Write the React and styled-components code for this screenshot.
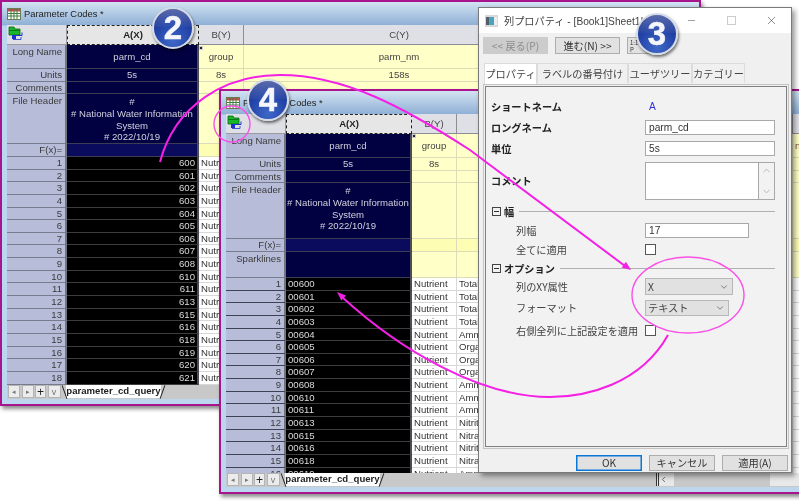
import React from 'react';
import styled, { createGlobalStyle } from 'styled-components';
import { ChevronDown, ChevronUp, ChevronLeft, X, Minus } from 'lucide-react';

const Global = createGlobalStyle`
  html, body { margin: 0; padding: 0; background: #fff; overflow: hidden; }
  * { box-sizing: border-box; }
`;

const Canvas = styled.div`
  position: relative;
  width: 799px;
  height: 501px;
  overflow: hidden;
  background: #fff;
  font-family: "Liberation Sans", Arial, sans-serif;
  filter: blur(0.4px);
`;

/* ---------- worksheet windows ---------- */
const Win = styled.section`
  position: absolute;
  left: ${p => p.$left}px;
  top: ${p => p.$top}px;
  width: ${p => p.$width}px;
  height: ${p => p.$height}px;
  display: flex;
  flex-direction: column;
  padding: 0 0 5px 5px;
  border: 2px solid #a8148e;
  background: linear-gradient(#d3e3f2 0, #8fb0d6 23px, #bcd6f0 24px);
  box-shadow: 2px 3px 4px rgba(0, 0, 0, 0.45);
`;
const TitleBar = styled.div`
  display: flex;
  align-items: center;
  gap: 3px;
  height: 23px;
  flex: none;
  font-size: 9.4px;
  color: #222;
`;
const Sheet = styled.div`
  flex: 1;
  min-height: 0;
  overflow: hidden;
  background: #c8c8c8;
  font-size: 9.6px;
  color: #333;
`;
const Row = styled.div`
  display: flex;
  height: ${p => p.$h}px;
`;
const Cell = styled.div`
  flex: none;
  width: ${p => p.$w}px;
  overflow: hidden;
  white-space: nowrap;
  line-height: ${p => p.$h - 1}px;
  padding: 0 2px;
  text-align: ${p => p.$align || 'left'};
`;
const Corner = styled(Cell)`
  padding: 1px 0 0 1px;
  background: #dfdfe6;
  border-right: 1px solid #9a9aa2;
  border-bottom: 1px solid #9a9aa2;
  line-height: 0;
`;
const ColHead = styled(Cell)`
  text-align: center;
  background: #dfdfe6;
  border-right: 1px solid #8d8d95;
  border-bottom: 1px solid #8d8d95;
  color: #444;
`;
const ColHeadActive = styled(Cell)`
  text-align: center;
  font-weight: 700;
  color: #222;
  background: #e6e6e6;
  border: 1px dashed #222;
  line-height: ${p => p.$h - 2}px;
`;
const RowHead = styled(Cell)`
  text-align: right;
  padding: 0 3px 0 0;
  background: #b7bdd9;
  border-bottom: 1px solid ${p => (p.$dark ? '#3b4254' : '#767c8e')};
  border-right: 2px solid #71767f;
  color: #3a3a3a;
  line-height: ${p => (p.$top ? 14 : p.$h - 1)}px;
`;
const SelCell = styled(Cell)`
  text-align: center;
  color: #d0d0dc;
  background: ${p => (p.$fx ? '#0b0b5e' : '#010142')};
  border-bottom: 1px solid #3c3c55;
  border-right: 2px solid #4d4d55;
`;
const HeaderText = styled.div`
  line-height: 11.8px;
  padding-top: 2px;
  white-space: nowrap;
  margin: 0 -3px;
`;
const BlackCell = styled(Cell)`
  background: #000;
  color: #dadada;
  border-bottom: 1px solid #3d3d3d;
  border-right: 2px solid #4d4d55;
`;
const YellowCell = styled(Cell)`
  text-align: center;
  color: #444;
  background: ${p => (p.$fx ? '#fdfdb4' : '#ffffc8')};
  border-bottom: 1px solid #dcdcb8;
  border-right: 1px solid #dcdcb8;
`;
const NextColCell = styled(YellowCell)`
  text-align: left;
  color: #7a4a3a;
`;
const WhiteCell = styled(Cell)`
  background: #fff;
  color: #333;
  border-bottom: 1px solid #d8d8d8;
  border-right: 1px solid #d8d8d8;
`;
const Handle = styled.i`
  position: absolute;
  left: ${p => p.$x}px;
  top: ${p => p.$y}px;
  width: 4px;
  height: 4px;
  background: #223;
  border: 1px solid #ccc;
`;
const TabBar = styled.div`
  display: flex;
  align-items: stretch;
  height: ${p => p.$h}px;
  flex: none;
  background: #c8c8c8;
  padding: 0 0 1px 1px;
`;
const NavBtn = styled.div`
  flex: none;
  width: ${p => p.$w || 12}px;
  margin-right: 1.5px;
  display: flex;
  align-items: center;
  justify-content: center;
  background: #ececec;
  border: 1px solid #b4b4b4;
  font-size: ${p => p.$fs || 8}px;
  color: ${p => p.$c || '#777'};
`;
const SheetTab = styled.div`
  position: relative;
  flex: none;
  margin-left: 4px;
  width: 95px;
  background: #fff;
  font-size: 9.6px;
  font-weight: 700;
  color: #222;
  text-align: center;
  line-height: 12px;
  &::before, &::after {
    content: "";
    position: absolute;
    top: 0;
    bottom: -1px;
    width: 1px;
    background: #222;
  }
  &::before { left: -2px; transform: rotate(-20deg); }
  &::after { right: -2px; transform: rotate(20deg); }
`;
const ScrollStub = styled.div`
  display: flex;
  flex: 1;
  margin-left: ${p => p.$ml}px;
  background: #e8e8e8;
  border-left: 3px double #333;
  color: #444;
  align-items: center;
`;
const ScrollTrack = styled.div`
  width: 96px;
  height: 100%;
  margin-left: 6px;
  background: #c8c8c8;
`;

/* ---------- dialog ---------- */
const Dialog = styled.section`
  position: absolute;
  left: 478px;
  top: 7px;
  width: 314px;
  height: 466px;
  display: flex;
  flex-direction: column;
  background: #f0f0f0;
  border: 1px solid #7a7a7a;
  box-shadow: 3px 3px 5px rgba(0, 0, 0, 0.4);
  font-family: "Noto Sans CJK JP", "Liberation Sans", sans-serif;
  font-size: 10.2px;
  color: #333;
`;
const DialogTitle = styled.div`
  display: flex;
  align-items: center;
  height: 25px;
  flex: none;
  padding-left: 6px;
  background: #fff;
  font-family: "Liberation Sans", "Noto Sans CJK JP", sans-serif;
  font-size: 10.2px;
  color: #444;
`;
const TitleText = styled.span`
  margin-left: 6px;
  flex: 1;
`;
const WinCtrl = styled.span`
  width: 40px;
  display: flex;
  justify-content: center;
  color: ${p => p.$c || '#333'};
`;
const RestoreBox = styled.i`
  width: 9px;
  height: 9px;
  border: 1px solid #ccc;
`;
const Toolbar = styled.div`
  display: flex;
  gap: 7px;
  height: 30px;
  flex: none;
  padding: 4px 0 0 4px;
`;
const ToolBtn = styled.div`
  width: ${p => p.$w}px;
  height: 17px;
  text-align: center;
  line-height: 15px;
  background: ${p => (p.$off ? '#cccccc' : '#e1e1e1')};
  color: ${p => (p.$off ? '#8c8c8c' : '#333')};
  border: 1px solid ${p => (p.$off ? '#cccccc' : '#adadad')};
`;
const TinyBtn = styled(ToolBtn)`
  font-size: 6px;
  line-height: 7px;
  text-align: left;
  padding: 1px 2px;
`;
const Tabs = styled.div`
  display: flex;
  height: 21px;
  flex: none;
  padding-left: 5px;
`;
const TabItem = styled.div`
  width: ${p => p.$w}px;
  height: ${p => (p.$on ? 21 : 20)}px;
  text-align: center;
  line-height: 20px;
  background: ${p => (p.$on ? '#fff' : '#f0f0f0')};
  border: 1px solid #dcdcdc;
  border-bottom: none;
  position: relative;
  z-index: ${p => (p.$on ? 1 : 0)};
  color: #444;
`;
const Panel = styled.div`
  margin: 0 2px 0 4px;
  height: 365px;
  flex: none;
  padding: 1px;
  border: 1px solid #c4c4c4;
`;
const PanelInner = styled.div`
  height: 100%;
  padding: 8px 0 0 5px;
  border: 1px solid #808080;
  background: #f2f2f2;
`;
const FormRow = styled.div`
  display: grid;
  grid-template-columns: 154px 1fr;
  align-items: center;
  height: ${p => p.$h}px;
`;
const Label = styled.div`
  padding-left: ${p => (p.$indent ? 25 : 0)}px;
  font-weight: ${p => (p.$strong ? 700 : 400)};
  color: ${p => (p.$strong ? '#222' : '#444')};
  white-space: nowrap;
`;
const Value = styled.div`
  color: #3030e0;
  font-family: "Liberation Sans", sans-serif;
  padding-left: 4px;
`;
const Input = styled.div`
  width: ${p => p.$w}px;
  height: 15px;
  padding-left: 3px;
  background: #fff;
  border: 1px solid #a8a8a8;
  font-family: "Liberation Sans", sans-serif;
  line-height: 13px;
  color: #333;
`;
const TextBox = styled.div`
  display: flex;
  width: 130px;
  height: 38px;
  border: 1px solid #a8a8a8;
`;
const TextBoxMain = styled.div`
  flex: 1;
  background: #fff;
  border-right: 1px solid #a8a8a8;
`;
const TextBoxBar = styled.div`
  width: 15px;
  display: flex;
  flex-direction: column;
  justify-content: space-between;
  align-items: center;
  padding: 2px 0;
  color: #b0b0b0;
`;
const Check = styled.div`
  width: 11px;
  height: 11px;
  background: #fff;
  border: 1px solid #555;
`;
const GroupRow = styled.div`
  display: flex;
  align-items: center;
  gap: 3px;
  height: ${p => p.$h}px;
  padding-left: 1px;
  padding-right: 11px;
  font-weight: 700;
  color: #222;
`;
const MinusBox = styled.span`
  position: relative;
  width: 9px;
  height: 9px;
  border: 1px solid #444;
  &::after {
    content: "";
    position: absolute;
    left: 1px;
    right: 1px;
    top: 3px;
    height: 1px;
    background: #333;
  }
`;
const GroupLine = styled.span`
  flex: 1;
  height: 1px;
  margin-left: 2px;
  background: #b0b0b0;
`;
const Select = styled.div`
  display: flex;
  align-items: center;
  justify-content: space-between;
  width: ${p => p.$w}px;
  height: ${p => p.$h}px;
  padding: 0 3px 0 2px;
  background: #e1e1e1;
  border: 1px solid #b8b8b8;
  color: #444;
`;
const Footer = styled.div`
  display: flex;
  justify-content: flex-end;
  gap: 7px;
  padding: 6px 3px 0 0;
`;
const FootBtn = styled.div`
  width: 66px;
  height: 16px;
  text-align: center;
  line-height: 14px;
  background: #e1e1e1;
  border: 1px solid ${p => (p.$focus ? '#0a78d7' : '#adadad')};
  box-shadow: ${p => (p.$focus ? 'inset 0 0 0 0.5px #0a78d7' : 'none')};
  color: #333;
`;

/* ---------- annotations ---------- */
const Overlay = styled.svg`
  position: absolute;
  left: 0;
  top: 0;
  pointer-events: none;
`;
const Badge = styled.div`
  position: absolute;
  left: ${p => p.$x - 21}px;
  top: ${p => p.$y - 21}px;
  width: 42px;
  height: 42px;
  border-radius: 50%;
  border: 2px solid #d4dae6;
  background:
    linear-gradient(rgba(255, 255, 255, 0.28), rgba(255, 255, 255, 0.04) 46%, transparent 47%),
    radial-gradient(circle at 50% 85%, #3f68c8 0, #2344a8 50%, #16287e 100%);
  box-shadow: 1px 2px 3px rgba(0, 0, 0, 0.55);
  color: #f4f6fb;
  font-weight: 700;
  font-size: 33px;
  line-height: 38px;
  text-align: center;
  -webkit-text-stroke: 0.5px #f4f6fb;
`;

const GridIcon = () => (
  <svg width="14" height="12" viewBox="0 0 14 12">
    <rect x="0.5" y="0.5" width="13" height="11" fill="#fff" stroke="#6d7a55" />
    <rect x="1" y="1" width="12" height="2.5" fill="#c0504d" />
    <path d="M1 5.5h12M1 8h12M4 1v10M7 1v10M10 1v10" stroke="#3f7f3f" strokeWidth="1" />
  </svg>
);
const BookIcon = () => (
  <svg width="18" height="16" viewBox="0 0 18 16">
    <path d="M1 1h5l1 2h5v6H1z" fill="#19b52a" stroke="#0a6a14" strokeWidth="0.8" />
    <rect x="1" y="4" width="11" height="1" fill="#0a7a18" />
    <path d="M8 9.5h6v-3" fill="none" stroke="#1c2fd0" strokeWidth="1" />
    <rect x="4" y="9" width="4" height="4" fill="#1c2fd0" />
    <path d="M5 13.5h8V11" fill="none" stroke="#1c2fd0" strokeWidth="0.8" />
  </svg>
);
const DialogIcon = () => (
  <svg width="13" height="12" viewBox="0 0 13 12">
    <rect x="0" y="0" width="13" height="12" fill="#d8d8d8" />
    <rect x="1" y="2" width="3" height="8" fill="#555f6a" />
    <rect x="4" y="2" width="5" height="8" fill="#4aa3c0" />
    <rect x="9" y="2" width="3" height="8" fill="#eee" />
  </svg>
);

const v1 = [600, 601, 602, 603, 604, 605, 606, 607, 608, 610, 611, 613, 615, 616, 618, 619, 620, 621];
const v2 = ['00600', '00601', '00602', '00603', '00604', '00605', '00606', '00607', '00608', '00610', '00611', '00613', '00615', '00616', '00618', '00619'];
const c2 = ['Total', 'Total', 'Total', 'Total', 'Ammonia', 'Organic', 'Organic', 'Organic', 'Ammonia', 'Ammonia', 'Ammonia', 'Nitrite', 'Nitrate', 'Nitrite', 'Nitrate', 'Ammonia'];

function Worksheet({ aw, hh, sparks, codes, cw, nextName }) {
  const head = 60, b = 45, d = 120;
  const colsYellow = (h, fx, bTxt, cTxt, dTxt) => (
    <>
      <YellowCell $w={b} $h={h} $fx={fx}>{bTxt}</YellowCell>
      <YellowCell $w={cw} $h={h} $fx={fx}>{cTxt}</YellowCell>
      <NextColCell $w={d} $h={h} $fx={fx}>{dTxt}</NextColCell>
    </>
  );
  return (
    <Sheet>
      <Row $h={20}>
        <Corner $w={head} $h={20}><BookIcon /></Corner>
        <ColHeadActive $w={aw} $h={20}>A(X)</ColHeadActive>
        <ColHead $w={b} $h={20}>B(Y)</ColHead>
        <ColHead $w={cw} $h={20}>C(Y)</ColHead>
        <ColHead $w={d} $h={20} />
      </Row>
      <Row $h={24}>
        <RowHead $w={head} $h={24} $top>Long Name</RowHead>
        <SelCell $w={aw} $h={24}>parm_cd</SelCell>
        {colsYellow(24, false, 'group', 'parm_nm', nextName)}
      </Row>
      <Row $h={13}>
        <RowHead $w={head} $h={13}>Units</RowHead>
        <SelCell $w={aw} $h={13}>5s</SelCell>
        {colsYellow(13, false, '8s', '158s')}
      </Row>
      <Row $h={12}>
        <RowHead $w={head} $h={12}>Comments</RowHead>
        <SelCell $w={aw} $h={12} />
        {colsYellow(12)}
      </Row>
      <Row $h={hh}>
        <RowHead $w={head} $h={hh} $top>File Header</RowHead>
        <SelCell $w={aw} $h={hh}>
          <HeaderText>#<br /># National Water Information<br />System<br /># 2022/10/19</HeaderText>
        </SelCell>
        {colsYellow(hh)}
      </Row>
      <Row $h={13}>
        <RowHead $w={head} $h={13}>F(x)=</RowHead>
        <SelCell $w={aw} $h={13} $fx />
        {colsYellow(13, true)}
      </Row>
      {sparks && (
        <Row $h={26}>
          <RowHead $w={head} $h={26} $top>Sparklines</RowHead>
          <SelCell $w={aw} $h={26} />
          {colsYellow(26)}
        </Row>
      )}
      {(codes ? v2 : v1).map((val, i) => (
        <Row $h={12.65} key={i}>
          <RowHead $w={head} $h={12.65} $dark={codes}>{i + 1}</RowHead>
          <BlackCell $w={aw} $h={12.65} $align={codes ? 'left' : 'right'}>{val}</BlackCell>
          <WhiteCell $w={b} $h={12.65}>Nutrient</WhiteCell>
          <WhiteCell $w={cw} $h={12.65}>{codes ? c2[i] : ''}</WhiteCell>
          <WhiteCell $w={d} $h={12.65} />
        </Row>
      ))}
    </Sheet>
  );
}

function Tabbar({ h, scroll }) {
  return (
    <TabBar $h={h}>
      <NavBtn $fs={7}>◂</NavBtn>
      <NavBtn $fs={7}>▸</NavBtn>
      <NavBtn $fs={12} $c="#222" $w={11}>+</NavBtn>
      <NavBtn $fs={9} $w={13}>v</NavBtn>
      <SheetTab>parameter_cd_query</SheetTab>
      {scroll && (
        <ScrollStub $ml={scroll}>
          <ChevronLeft size={9} />
          <ScrollTrack />
        </ScrollStub>
      )}
    </TabBar>
  );
}

const Arrow = ({ x, y, a }) => (
  <polygon points="0,0 -9,-3.5 -9,3.5" fill="#f520e6" transform={`translate(${x} ${y}) rotate(${a})`} />
);

export default function App() {
  return (
    <Canvas>
      <Global />
      <Win $left={0} $top={0} $width={701} $height={406}>
        <TitleBar><GridIcon />Parameter Codes *</TitleBar>
        <Worksheet aw={132} hh={50} cw={311} />
        <Tabbar h={14} />
        <Handle $x={197} $y={44} />
      </Win>

      <Win $left={219} $top={89} $width={640} $height={405}>
        <TitleBar><GridIcon />Parameter Codes *</TitleBar>
        <Worksheet aw={126} hh={56} cw={336} sparks codes nextName="n" />
        <Tabbar h={14} scroll={276} />
        <Handle $x={191} $y={43} />
      </Win>

      <Dialog>
        <DialogTitle>
          <DialogIcon />
          <TitleText>列プロパティ - [Book1]Sheet1!(A)</TitleText>
          <WinCtrl><Minus size={11} strokeWidth={1} /></WinCtrl>
          <WinCtrl><RestoreBox /></WinCtrl>
          <WinCtrl><X size={13} strokeWidth={1} /></WinCtrl>
        </DialogTitle>
        <Toolbar>
          <ToolBtn $w={65} $off>&lt;&lt; 戻る(P)</ToolBtn>
          <ToolBtn $w={65}>進む(N) &gt;&gt;</ToolBtn>
          <TinyBtn $w={30}>1:1<br />P</TinyBtn>
        </Toolbar>
        <Tabs>
          <TabItem $w={53} $on>プロパティ</TabItem>
          <TabItem $w={91}>ラベルの番号付け</TabItem>
          <TabItem $w={64}>ユーザツリー</TabItem>
          <TabItem $w={53}>カテゴリー</TabItem>
        </Tabs>
        <Panel>
          <PanelInner>
            <FormRow $h={22}><Label $strong>ショートネーム</Label><Value>A</Value></FormRow>
            <FormRow $h={21}><Label $strong>ロングネーム</Label><Input $w={130}>parm_cd</Input></FormRow>
            <FormRow $h={21}><Label $strong>単位</Label><Input $w={130}>5s</Input></FormRow>
            <FormRow $h={43}>
              <Label $strong>コメント</Label>
              <TextBox>
                <TextBoxMain />
                <TextBoxBar><ChevronUp size={11} /><ChevronDown size={11} /></TextBoxBar>
              </TextBox>
            </FormRow>
            <GroupRow $h={18}><MinusBox />幅<GroupLine /></GroupRow>
            <FormRow $h={20}><Label $indent>列幅</Label><Input $w={104}>17</Input></FormRow>
            <FormRow $h={19}><Label $indent>全てに適用</Label><Check /></FormRow>
            <GroupRow $h={18}><MinusBox />オプション<GroupLine /></GroupRow>
            <FormRow $h={19}>
              <Label $indent>列のXY属性</Label>
              <Select $w={88} $h={17}>X<ChevronDown size={10} strokeWidth={1.5} /></Select>
            </FormRow>
            <FormRow $h={23}>
              <Label $indent>フォーマット</Label>
              <Select $w={84} $h={16}>テキスト<ChevronDown size={10} strokeWidth={1.5} /></Select>
            </FormRow>
            <FormRow $h={22}><Label $indent>右側全列に上記設定を適用</Label><Check /></FormRow>
          </PanelInner>
        </Panel>
        <Footer>
          <FootBtn $focus>OK</FootBtn>
          <FootBtn>キャンセル</FootBtn>
          <FootBtn>適用(A)</FootBtn>
        </Footer>
      </Dialog>

      <Overlay width="799" height="501" viewBox="0 0 799 501">
        <g fill="none" stroke="#f520e6">
          <path d="M160 162 C175 105 225 75 280 75 C345 75 405 108 470 150 L625 266" strokeWidth="2" />
          <path d="M668 335 C640 385 585 397 550 397 C480 397 400 350 342 297" strokeWidth="2" />
          <ellipse cx="688" cy="295" rx="56" ry="38" strokeWidth="1.4" stroke="#fa50e8" />
          <ellipse cx="232" cy="124" rx="18" ry="18" strokeWidth="1.4" stroke="#fa50e8" />
        </g>
        <Arrow x={631} y={270} a={37} />
        <Arrow x={337} y={292} a={222} />
      </Overlay>
      <Badge $x={173} $y={28}>2</Badge>
      <Badge $x={657} $y={34}>3</Badge>
      <Badge $x={268} $y={100}>4</Badge>
    </Canvas>
  );
}
